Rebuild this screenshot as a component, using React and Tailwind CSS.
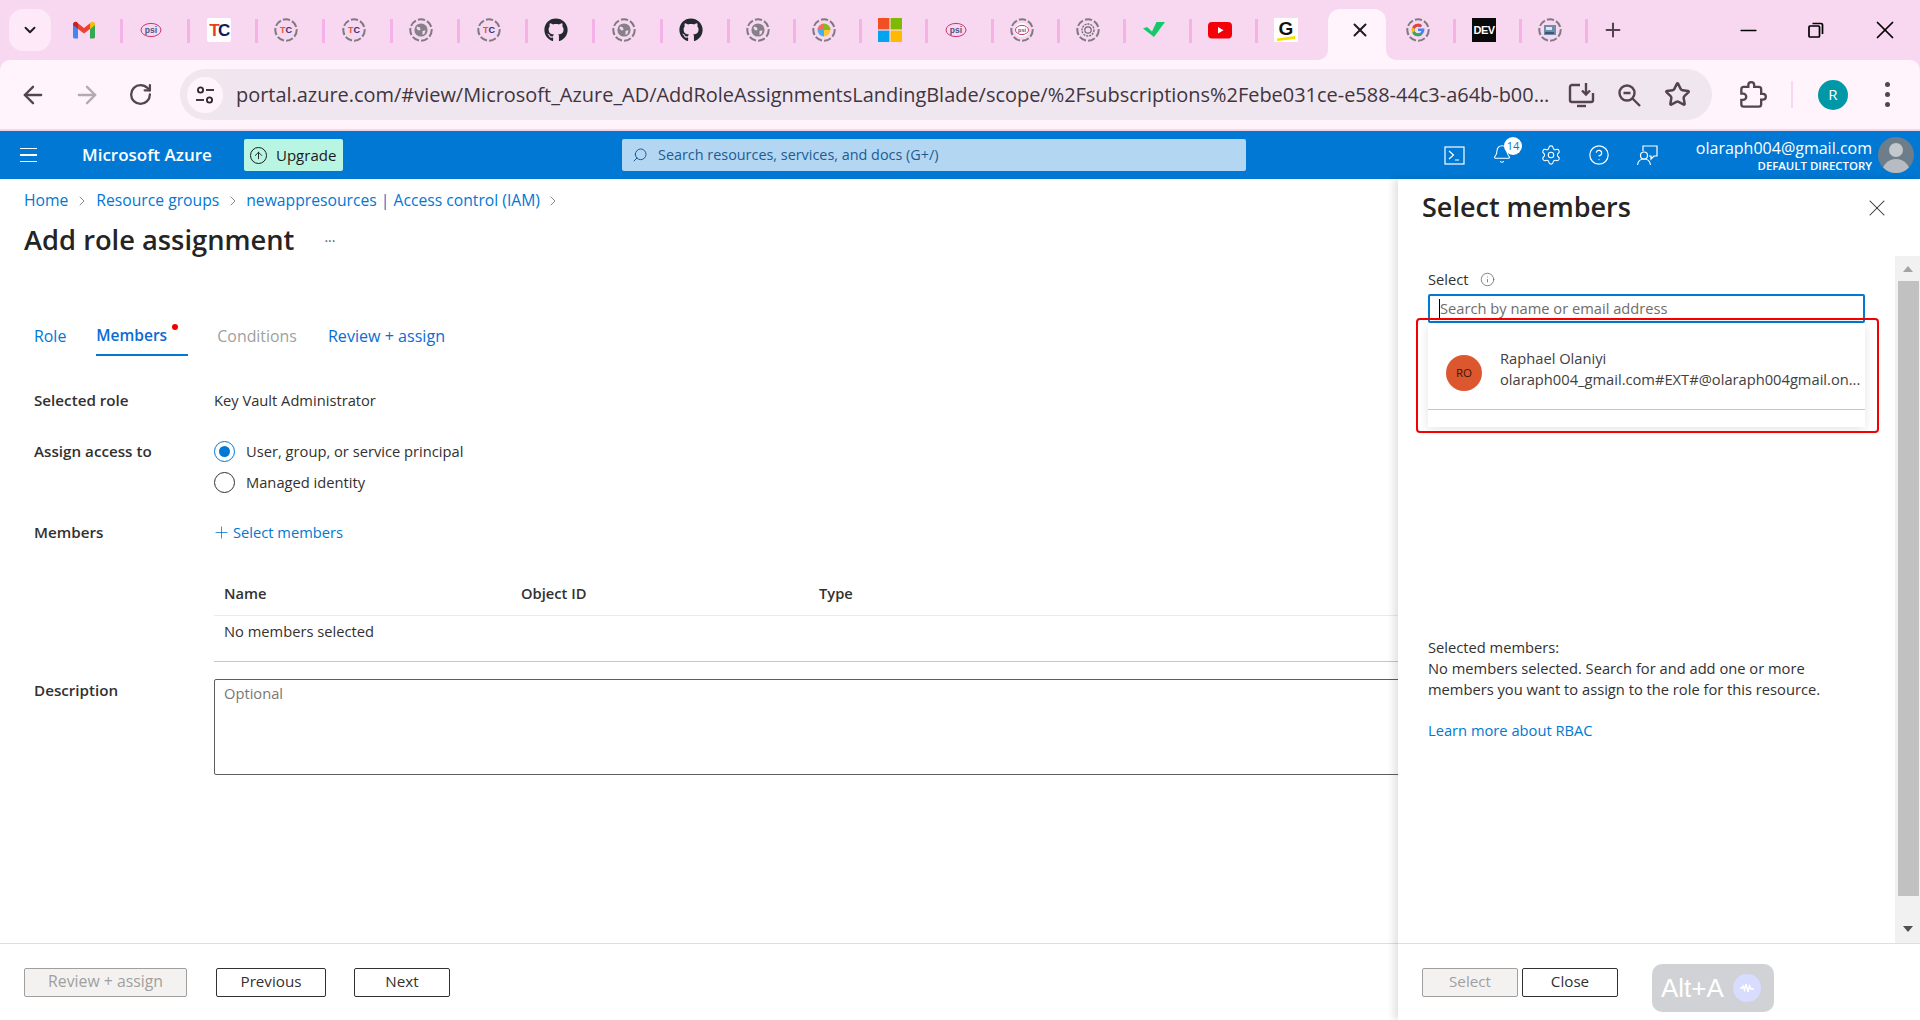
import React from "react";
import { FaGithub } from "react-icons/fa";
import { ArrowLeft, ArrowRight, RotateCw, Star, X, Minus, Plus, Settings, Search, Bell, ChevronRight, ChevronDown, Info, CircleHelp, ArrowUp } from "lucide-react";

const svgFont = { fontFamily: "'Liberation Sans', sans-serif" };

function Ring({ children }) {
  return (
    <svg width="24" height="24" viewBox="0 0 24 24">
      <circle cx="12" cy="12" r="10.7" fill="none" stroke="#7f7a80" strokeWidth="2" strokeDasharray="7.2 2.2" />
      {children}
    </svg>
  );
}
const TcText = ({ size = 9, y = 15 }) => (
  <text x="12" y={y} textAnchor="middle" fontSize={size} fontWeight="700" style={svgFont}>
    <tspan fill="#e8572a">T</tspan>
    <tspan fill="#2b2f77">C</tspan>
  </text>
);
const Globe = () => (
  <>
    <circle cx="12" cy="12" r="6.6" fill="#85808a" />
    <path d="M8 8.5l3 1 .5 2.5-2 .5-2-2zM13.5 13l3-.8-1 3.5-2 1.3z" fill="#f8d7f0" />
  </>
);
const Sep = () => <div className="absolute right-0 top-[19px] h-[24px] w-[3px] bg-[#f5b1e8]" />;

function Tab({ children, last, narrow }) {
  return (
    <div className={`relative flex h-[60px] shrink-0 items-center ${narrow ? "w-[66px] pl-[16px]" : "w-[67.5px] pl-[16.5px]"}`}>
      {children}
      {!last && <Sep />}
    </div>
  );
}

const Gmail = () => (
  <svg width="24" height="24" viewBox="0 0 24 24">
    <path d="M1 6v13c0 .8.6 1.4 1.4 1.4H6V11z" fill="#4285f4" />
    <path d="M18 11v9.4h3.6c.8 0 1.4-.6 1.4-1.4V6z" fill="#34a853" />
    <path d="M6 11V5.200L12 10l6-4.800V11l-6 4.600z" fill="#ea4335" />
    <path d="M1 6c0-2 2.300-3 3.800-1.900L6 5.200V11L1 7z" fill="#c5221f" />
    <path d="M18 5.200l1.200-1.100C20.700 3 23 4 23 6v1l-5 4z" fill="#fbbc04" />
  </svg>
);
const Psi = ({ small }) => (
  <svg width="24" height="24" viewBox="0 0 24 24">
    <ellipse cx="12" cy="12" rx={small ? 6.5 : 10} ry={small ? 4.6 : 6.6} fill="none" stroke="#c9366f" strokeWidth="1" />
    <text x="12" y={small ? 14 : 15} textAnchor="middle" fontSize={small ? 5.5 : 8.500} fontWeight="700" fill="#4b5680" style={svgFont}>psi</text>
  </svg>
);
const TcLogo = () => (
  <svg width="24" height="24" viewBox="0 0 24 24">
    <rect width="24" height="24" rx="2" fill="#fff" />
    <text x="12" y="18" textAnchor="middle" fontSize="17" fontWeight="700" style={svgFont} letterSpacing="-1.500">
      <tspan fill="#e8401c">T</tspan>
      <tspan fill="#141a5c">C</tspan>
    </text>
  </svg>
);
const MsLogo = () => (
  <svg width="24" height="24" viewBox="0 0 24 24">
    <rect width="11.400" height="11.400" fill="#f25022" />
    <rect x="12.600" width="11.400" height="11.400" fill="#7fba00" />
    <rect y="12.600" width="11.400" height="11.400" fill="#00a4ef" />
    <rect x="12.600" y="12.600" width="11.400" height="11.400" fill="#ffb900" />
  </svg>
);
const TabIcons = [
  <Gmail />,
  <Psi />,
  <TcLogo />,
  <Ring><TcText /></Ring>,
  <Ring><TcText /></Ring>,
  <Ring><Globe /></Ring>,
  <Ring><TcText /></Ring>,
  <FaGithub size={24} color="#24292f" />,
  <Ring><Globe /></Ring>,
  <FaGithub size={24} color="#24292f" />,
];
const TabIcons2 = [
  <Ring><Globe /></Ring>,
  <Ring>
    <path d="M12 12V5.500A6.500 6.500 0 0 1 18.500 12z" fill="#8ab818" />
    <path d="M12 12H5.500A6.500 6.500 0 0 1 12 5.500z" fill="#f2705a" />
    <path d="M12 12v6.500A6.500 6.500 0 0 1 5.500 12z" fill="#3fb1ee" />
    <path d="M12 12h6.500A6.500 6.500 0 0 1 12 18.500z" fill="#ffc43a" />
  </Ring>,
  <MsLogo />,
  <Psi />,
  <Ring><circle cx="12" cy="12" r="7" fill="#fff" /><Psi small /></Ring>,
  <Ring>
    <circle cx="12" cy="12" r="6" fill="none" stroke="#6b6870" strokeWidth="1.300" strokeDasharray="2 1" />
    <circle cx="12" cy="12" r="3.200" fill="none" stroke="#6b6870" strokeWidth="1.200" />
  </Ring>,
  <svg width="24" height="24" viewBox="0 0 24 24">
    <path d="M1 10.500l4-1.500 5 4.500 4.500-9.500H23l-11 15z" fill="#14c96a" />
  </svg>,
  <svg width="24" height="24" viewBox="0 0 24 24">
    <rect y="4" width="24" height="16.500" rx="4" fill="#f40009" />
    <path d="M10 9l5.500 3.200L10 15.500z" fill="#fff" />
  </svg>,
];
const GBox = () => (
  <svg width="24" height="24" viewBox="0 0 24 24">
    <rect width="24" height="24" fill="#fff" />
    <text x="12" y="17" textAnchor="middle" fontSize="19" fontWeight="700" fill="#111" style={svgFont}>G</text>
    <path d="M3 20.500l18-2.500v3L3 23z" fill="#f6e000" />
  </svg>
);
const GoogleRing = () => (
  <Ring>
    <path d="M12 10.500h6.400c.4 3.800-2.300 7.700-6.400 7.700a6.200 6.200 0 0 1 0-12.400c1.700 0 3 .6 4.100 1.600l-1.900 1.800c-.5-.5-1.200-.8-2.200-.8-1.900 0-3.400 1.600-3.400 3.500s1.500 3.500 3.400 3.500c1.800 0 3-1 3.200-2.400H12z" fill="#4285f4" />
    <path d="M6.300 9.300l2.400 1.700c.4-1.400 1.800-2.500 3.300-2.500 1 0 1.700.3 2.200.8l1.900-1.800C15 6.400 13.700 5.800 12 5.800a6.200 6.200 0 0 0-5.700 3.500z" fill="#ea4335" />
    <path d="M6.300 14.700A6.200 6.200 0 0 0 12 18.200c1.600 0 3-.5 4-1.500l-2.300-1.800c-.5.300-1 .5-1.700.5-1.600 0-2.900-1-3.300-2.500z" fill="#34a853" />
    <path d="M6.300 9.300a6 6 0 0 0 0 5.400l2.400-1.800a3.600 3.600 0 0 1 0-1.900z" fill="#fbbc04" />
  </Ring>
);
const DevLogo = () => (
  <div className="flex h-[24px] w-[24px] items-center justify-center bg-[#0a0a0a] font-['Liberation_Sans',sans-serif] text-[11px] font-bold tracking-[-0.5px] text-white">DEV</div>
);
const ShotRing = () => (
  <Ring>
    <rect x="6" y="7" width="12" height="10" fill="#6f8caa" />
    <rect x="8" y="9" width="6" height="3" fill="#dfe8f2" />
    <rect x="7" y="14" width="9" height="2" fill="#3f5672" />
  </Ring>
);

function TabStrip() {
  return (
    <div className="flex h-[60px] shrink-0 items-center bg-[#f8d7f0] pl-[9px]">
      <div className="mr-[5px] flex h-[42px] w-[42px] shrink-0 items-center justify-center rounded-[14px] bg-[#fde9f7]">
        <ChevronDown size={18} strokeWidth={2.500} color="#1f1b24" />
      </div>
      <div className="-ml-[1px] flex">
        {TabIcons.map((ic, i) => <Tab key={i}>{ic}</Tab>)}
        {TabIcons2.map((ic, i) => <Tab key={i} narrow>{ic}</Tab>)}
        <Tab narrow last><GBox /></Tab>
      </div>
      <div className="relative ml-[4px] mt-[9px] flex h-[51px] w-[58px] shrink-0 items-start justify-center rounded-t-[12px] bg-[#fff4fb] pl-[6px] pt-[10px]">
        <X size={22} strokeWidth={2.200} color="#1f1b24" />
        <div className="absolute -left-[10px] bottom-0 h-[10px] w-[10px] bg-[#fff4fb]"><div className="h-full w-full rounded-br-[10px] bg-[#f8d7f0]" /></div>
        <div className="absolute -right-[10px] bottom-0 h-[10px] w-[10px] bg-[#fff4fb]"><div className="h-full w-full rounded-bl-[10px] bg-[#f8d7f0]" /></div>
      </div>
      <div className="flex">
        <div className="relative flex h-[60px] w-[70px] shrink-0 items-center pl-[20px]"><GoogleRing /><Sep /></div>
        <Tab narrow><DevLogo /></Tab>
        <Tab narrow><ShotRing /></Tab>
      </div>
      <div className="ml-[13px] flex w-[24px] justify-center"><Plus size={22} strokeWidth={2.200} color="#53434f" /></div>
      <div className="ml-auto flex items-center pr-[20px] text-black">
        <Minus size={25} strokeWidth={1.600} />
        <svg className="ml-[46px]" width="18" height="18" viewBox="0 0 18 18" fill="none" stroke="#000" strokeWidth="1.700">
          <rect x="2" y="5" width="10.500" height="11" rx="1" />
          <path d="M5.500 2.500h8.500a1.500 1.500 0 0 1 1.500 1.500v9" />
        </svg>
        <X className="ml-[45px]" size={30} strokeWidth={1.400} />
      </div>
    </div>
  );
}

function Toolbar() {
  const ic = "#55434f";
  return (
    <div className="flex h-[71px] shrink-0 items-center rounded-t-[10px] border-b-2 border-[#f3d6e5] bg-[#fff4fb]">
      <div className="flex w-[180px] shrink-0 items-center pl-[19px]">
        <ArrowLeft size={28} strokeWidth={2} color={ic} />
        <ArrowRight className="ml-[26px]" size={28} strokeWidth={2} color="#b5a9b1" />
        <RotateCw className="ml-[27px]" size={25} strokeWidth={2.200} color={ic} />
      </div>
      <div className="flex h-[51px] w-[1532px] shrink-0 items-center rounded-full bg-[#f0e6ef] pl-[7px]">
        <div className="flex h-[36px] w-[36px] shrink-0 items-center justify-center rounded-full bg-[#fff4fb]">
          <svg width="20" height="20" viewBox="0 0 20 20" fill="none" stroke="#2d2530" strokeWidth="1.800">
            <circle cx="5.500" cy="5" r="2.600" />
            <path d="M11 5h8" />
            <path d="M1 15h8" />
            <circle cx="14.500" cy="15" r="2.600" />
          </svg>
        </div>
        <div className="ml-[13px] w-[1320px] shrink-0 whitespace-nowrap text-[19.950px] text-[#3f3540]">portal.azure.com/#view/Microsoft_Azure_AD/AddRoleAssignmentsLandingBlade/scope/%2Fsubscriptions%2Febe031ce-e588-44c3-a64b-b00...</div>
        <div className="ml-[11px] flex items-center">
          <svg width="28" height="28" viewBox="0 0 28 28" fill="none" stroke={ic} strokeWidth="2.400">
            <path d="M13 4H5a2 2 0 0 0-2 2v13a2 2 0 0 0 2 2h19a2 2 0 0 0 2-2v-7" />
            <path d="M10 25h9" />
            <path d="M19 2v11M15 9.500l4 4 4-4" />
          </svg>
          <svg className="ml-[21px]" width="26" height="26" viewBox="0 0 26 26" fill="none" stroke={ic} strokeWidth="2.400">
            <circle cx="11" cy="11" r="7.500" />
            <path d="M16.500 16.500L24 24M7.500 11h7" />
          </svg>
          <Star className="ml-[22px]" size={27} strokeWidth={2.200} color={ic} />
        </div>
      </div>
      <div className="ml-[27px] flex shrink-0 items-center">
        <svg width="28" height="28" viewBox="0 0 24 24" fill="none" stroke={ic} strokeWidth="2">
          <path d="M20.500 11H19V7c0-1.100-.9-2-2-2h-4V3.500C13 2.120 11.880 1 10.500 1S8 2.120 8 3.500V5H4c-1.100 0-1.990.9-1.990 2v3.800H3.500c1.490 0 2.700 1.210 2.700 2.700s-1.210 2.700-2.700 2.700H2V20c0 1.100.9 2 2 2h13c1.100 0 2-.9 2-2v-4h1.500c1.380 0 2.500-1.120 2.500-2.500S21.880 11 20.500 11z" />
        </svg>
        <div className="ml-[24px] h-[27px] w-[2px] bg-[#f8d7f0]" />
        <div className="ml-[25px] flex h-[30px] w-[30px] items-center justify-center rounded-full bg-[#0097a7] text-[15px] text-white">R</div>
        <div className="ml-[37px] flex flex-col gap-[5px]">
          <div className="h-[5px] w-[5px] rounded-full bg-[#55434f]" />
          <div className="h-[5px] w-[5px] rounded-full bg-[#55434f]" />
          <div className="h-[5px] w-[5px] rounded-full bg-[#55434f]" />
        </div>
      </div>
    </div>
  );
}

function AzureHeader() {
  return (
    <div className="relative flex h-[48px] shrink-0 items-center bg-[#0078d4] text-white">
      <div className="ml-[20px] flex w-[17px] flex-col gap-[5px]">
        <div className="h-[1.500px] bg-white" />
        <div className="h-[1.500px] bg-white" />
        <div className="h-[1.500px] bg-white" />
      </div>
      <div className="ml-[45px] w-[130px] whitespace-nowrap text-[17px] font-semibold">Microsoft Azure</div>
      <div className="ml-[32px] flex h-[32px] w-[99px] items-center rounded-[2px] bg-[#b9f5e3] pl-[6px] text-[15px] text-[#1b1b1b]">
        <div className="flex h-[17px] w-[17px] items-center justify-center rounded-full border border-[#1b1b1b]"><ArrowUp size={11} strokeWidth={2} /></div>
        <span className="ml-[9px]">Upgrade</span>
      </div>
      <div className="ml-[279px] flex h-[32px] w-[624px] items-center rounded-[2px] bg-[#b3d6f2] pl-[10px] text-[14.400px] text-[#1b5d92]">
        <Search size={16} strokeWidth={1.500} className="-scale-x-100" />
        <span className="ml-[10px]">Search resources, services, and docs (G+/)</span>
      </div>
      <div className="ml-[198px] flex items-center">
        <svg width="21" height="21" viewBox="0 0 21 21" fill="none" stroke="#fff" strokeWidth="1.200">
          <rect x="1" y="2" width="19" height="17" />
          <path d="M5 6l4.500 4L5 14M11 15h4" />
        </svg>
        <div className="relative ml-[27px] h-[22px] w-[22px]">
          <Bell size={20} strokeWidth={1.300} />
          <div className="absolute -right-[8px] -top-[7px] flex h-[18px] w-[18px] items-center justify-center rounded-full bg-white text-[11px] text-[#0078d4]">14</div>
        </div>
        <Settings className="ml-[26px]" size={22} strokeWidth={1.200} />
        <CircleHelp className="ml-[26px]" size={22} strokeWidth={1.300} />
        <svg className="ml-[26px]" width="22" height="22" viewBox="0 0 22 22" fill="none" stroke="#fff" strokeWidth="1.200">
          <path d="M7 7V2h14v10h-3l-3 3v-3h-2" />
          <circle cx="8" cy="11.500" r="3.500" />
          <path d="M1.500 21c.5-4 3-6 6.500-6s6 2 6.500 6" />
        </svg>
      </div>
      <div className="ml-[14px] flex w-[200px] flex-col items-end pt-[1px]">
        <div className="whitespace-nowrap text-[16px] leading-[19px]">olaraph004@gmail.com</div>
        <div className="whitespace-nowrap text-[11.400px] font-semibold leading-[15px]">DEFAULT DIRECTORY</div>
      </div>
      <div className="relative ml-[6px] h-[36px] w-[36px] overflow-hidden rounded-full bg-[#6e7d8a]">
        <div className="mx-auto mt-[6px] h-[14px] w-[14px] rounded-full bg-[#c3c8cc]" />
        <div className="mx-auto mt-[2px] h-[20px] w-[28px] rounded-t-full bg-[#b6bcc1]" />
      </div>
    </div>
  );
}

const Chev = () => <ChevronRight size={16} strokeWidth={1.100} color="#605e5c" />;

function Radio({ on }) {
  return (
    <div className={`flex h-[21px] w-[21px] shrink-0 items-center justify-center rounded-full border ${on ? "border-[#0078d4]" : "border-[#323130]"}`}>
      {on && <div className="h-[11px] w-[11px] rounded-full bg-[#0078d4]" />}
    </div>
  );
}

function Left() {
  return (
    <div className="flex w-[1398px] shrink-0 flex-col overflow-hidden text-[14.700px] text-[#323130]">
      <div className="h-[764px] shrink-0">
        <div className="flex h-[44px] items-center pl-[24px] text-[15.700px] text-[#0078d4]">
          <span>Home</span>
          <span className="mx-[6px]"><Chev /></span>
          <span>Resource groups</span>
          <span className="mx-[5.500px]"><Chev /></span>
          <span>newappresources | Access control (IAM)</span>
          <span className="ml-[5px]"><Chev /></span>
        </div>
        <div className="flex h-[34px] items-center pl-[24px]">
          <span className="text-[27.300px] font-semibold text-[#252423]">Add role assignment</span>
          <span className="ml-[30px] text-[14px] text-[#605e5c]">···</span>
        </div>
        <div className="mt-[60px] flex h-[39px] pl-[24px] text-[15.900px]">
          <div className="flex h-[39px] items-center px-[10px] text-[#0078d4]">Role</div>
          <div className="relative ml-[20px] flex h-[39px] w-[92px] items-center border-b-2 border-[#0078d4] text-[15.500px] font-semibold text-[#0a6cd4]">
            Members
            <div className="absolute left-[76px] top-[7px] h-[6px] w-[6px] rounded-full bg-[#f00000]" />
          </div>
          <div className="ml-[29px] flex h-[39px] items-center text-[#a19f9d]">Conditions</div>
          <div className="ml-[31px] flex h-[39px] items-center text-[16.100px] text-[#0a6cd4]">Review + assign</div>
        </div>
        <div className="mt-[33px] flex h-[22px] items-center pl-[34px]">
          <div className="w-[180px] shrink-0 text-[15.200px] font-semibold">Selected role</div>
          <div>Key Vault Administrator</div>
        </div>
        <div className="mt-[29px] flex pl-[34px]">
          <div className="flex h-[22px] w-[180px] shrink-0 items-center text-[15.200px] font-semibold">Assign access to</div>
          <div className="flex flex-col gap-[9px]">
            <div className="flex h-[22px] items-center gap-[11px]"><Radio on />User, group, or service principal</div>
            <div className="flex h-[22px] items-center gap-[11px]"><Radio />Managed identity</div>
          </div>
        </div>
        <div className="mt-[28px] flex h-[22px] items-center pl-[34px]">
          <div className="w-[180px] shrink-0 text-[15.200px] font-semibold">Members</div>
          <div className="flex items-center text-[#0078d4]"><Plus size={19} strokeWidth={1} className="-ml-[2px]" /><span className="ml-[2px]">Select members</span></div>
        </div>
        <div className="ml-[214px] mt-[39px] w-[1184px]">
          <div className="flex h-[34px] items-start border-b border-[#edebe9] pl-[10px] font-semibold text-[#323130]">
            <div className="flex h-[22px] w-[297px] items-center">Name</div>
            <div className="flex h-[22px] w-[298px] items-center">Object ID</div>
            <div className="flex h-[22px] items-center">Type</div>
          </div>
          <div className="h-[46px] border-b border-[#c8c6c4] pl-[10px] pt-[4px] leading-[22px]">No members selected</div>
        </div>
        <div className="mt-[17px] flex pl-[34px]">
          <div className="flex h-[22px] w-[180px] shrink-0 items-center text-[15.200px] font-semibold">Description</div>
          <div className="h-[96px] w-[1300px] shrink-0 rounded-[2px] border border-[#605e5c] pl-[9px] pt-[2px] text-[#7a7876]">Optional</div>
        </div>
      </div>
      <div className="flex h-[77px] shrink-0 items-start border-t border-[#e1dfdd] pl-[24px] pt-[24px]">
        <Btn w="w-[163px]" disabled><span className="text-[15.800px]">Review + assign</span></Btn>
        <div className="ml-[29px]"><Btn w="w-[110px]">Previous</Btn></div>
        <div className="ml-[28px]"><Btn w="w-[96px]">Next</Btn></div>
      </div>
    </div>
  );
}

function Btn({ w, disabled, children }) {
  return (
    <div className={`flex h-[29px] items-center justify-center rounded-[2px] border pb-[2px] text-[15.200px] font-medium ${w} ${disabled ? "border-[#a19f9d] bg-[#f3f2f1] text-[#a19f9d]" : "border-[#323130] bg-white text-[#323130]"}`}>
      {children}
    </div>
  );
}

function Panel() {
  return (
    <div className="relative flex w-[522px] shrink-0 flex-col bg-white text-[14.700px] text-[#323130] shadow-[-4px_0_8px_rgba(0,0,0,0.12)]">
      <div className="flex h-[77px] shrink-0 items-start justify-between pl-[24px] pr-[29px] pt-[8px]">
        <div className="text-[27px] font-semibold leading-[40px] text-[#252423]">Select members</div>
        <X className="mt-[7px]" size={28} strokeWidth={0.900} color="#323130" />
      </div>
      <div className="flex h-[687px] shrink-0">
        <div className="w-[497px] pl-[30px] pr-[30px] pt-[12px]">
          <div className="flex h-[22px] items-center">
            Select
            <Info className="ml-[11px]" size={15} strokeWidth={1.200} color="#605e5c" />
          </div>
          <div className="relative mt-[4px] flex h-[29px] items-center rounded-[2px] border-2 border-[#0078d4] pl-[9px] text-[#6f6d6b]">
            <div className="mr-0 h-[20px] w-[1px] bg-black" />
            Search by name or email address
            <div className="absolute -left-[2px] top-[27px] z-10 h-[104px] w-[437px] bg-white shadow-[0_2px_10px_rgba(0,0,0,0.11)]">
              <div className="flex h-[87px] items-center border-b border-[#c8c6c4] pl-[18px] pt-[6px] text-[#424140]">
                <div className="mt-[7px] flex h-[36px] w-[36px] shrink-0 items-center justify-center rounded-full bg-[#dc572e] text-[11.500px] text-[#3a1408]">RO</div>
                <div className="ml-[18px] leading-[21px]">
                  <div>Raphael Olaniyi</div>
                  <div className="whitespace-nowrap">olaraph004_gmail.com#EXT#@olaraph004gmail.on...</div>
                </div>
              </div>
            </div>
            <div className="absolute -left-[14px] top-[22px] z-20 h-[115px] w-[463px] rounded-[4px] border-2 border-[#f40000]" />
          </div>
          <div className="mt-[314px] leading-[21px]">
            <div>Selected members:</div>
            <div>No members selected. Search for and add one or more</div>
            <div>members you want to assign to the role for this resource.</div>
          </div>
          <div className="mt-[19px] leading-[22px] text-[#0078d4]">Learn more about RBAC</div>
        </div>
        <div className="flex w-[25px] shrink-0 flex-col items-center bg-[#f1f1f1] pl-[1px]">
          <div className="flex h-[25px] shrink-0 items-center justify-center">
            <div className="h-0 w-0 border-x-[5px] border-b-[6px] border-x-transparent border-b-[#a3a3a3]" />
          </div>
          <div className="h-[615px] w-[21px] shrink-0 bg-[#c1c1c1]" />
          <div className="mt-auto flex h-[25px] items-center justify-center pb-[3px]">
            <div className="h-0 w-0 border-x-[5px] border-t-[6px] border-x-transparent border-t-[#505050]" />
          </div>
        </div>
      </div>
      <div className="flex h-[77px] shrink-0 items-start border-t border-[#e1dfdd] pl-[24px] pt-[24px]">
        <Btn w="w-[96px]" disabled>Select</Btn>
        <div className="ml-[4px]"><Btn w="w-[96px]">Close</Btn></div>
      </div>
      <div className="absolute bottom-[8px] left-[254px] z-30 flex h-[48px] w-[122px] items-center rounded-[10px] bg-[#d1d2d6] pl-[9px] font-['Liberation_Sans',sans-serif] text-[26px] text-white">
        Alt+A
        <div className="ml-[9px] flex h-[28px] w-[28px] items-center justify-center rounded-full bg-[#d8dcfe]">
          <svg width="16" height="12" viewBox="0 0 16 12" fill="none" stroke="#fff" strokeWidth="1.500">
            <path d="M1 6h2l1-2 1.500 4L7 2l2 8 1.500-6L12 7h3" />
          </svg>
        </div>
      </div>
    </div>
  );
}

export default function App() {
  return (
    <div className="flex h-[1020px] w-[1920px] flex-col overflow-hidden bg-white font-['Open_Sans',sans-serif]">
      <TabStrip />
      <div className="bg-[#f8d7f0]"><Toolbar /></div>
      <AzureHeader />
      <div className="flex h-[841px] shrink-0">
        <Left />
        <Panel />
      </div>
    </div>
  );
}
